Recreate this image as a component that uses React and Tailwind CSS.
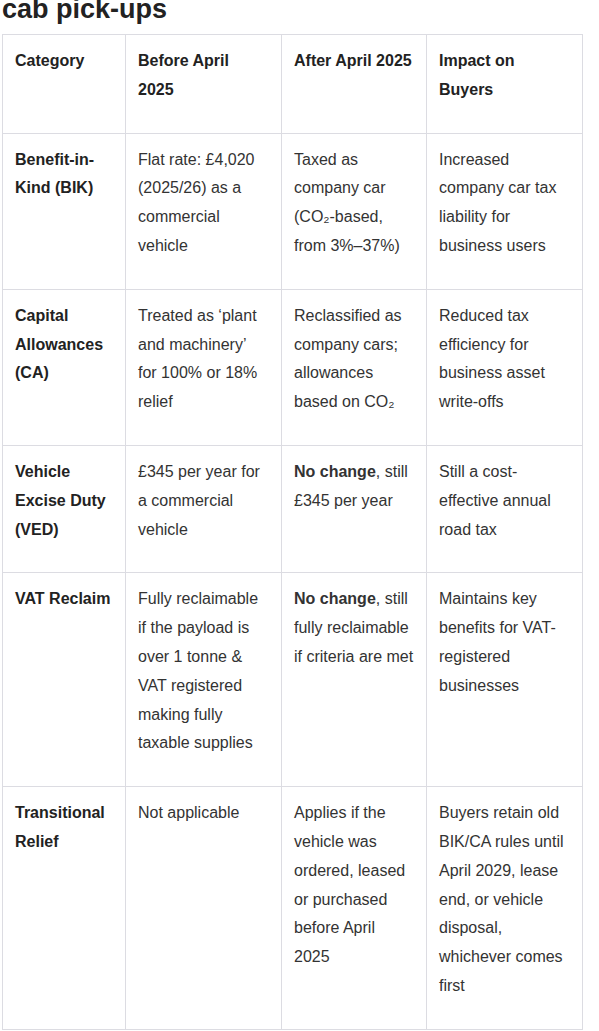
import React from "react";

const rows = [
  {
    cat: "Benefit-in-Kind (BIK)",
    before: "Flat rate: £4,020 (2025/26) as a commercial vehicle",
    after: "Taxed as company car (CO₂-based, from 3%–37%)",
    impact: "Increased company car tax liability for business users",
  },
  {
    cat: "Capital Allowances (CA)",
    before: "Treated as ‘plant and machinery’ for 100% or 18% relief",
    after: "Reclassified as company cars; allowances based on CO₂",
    impact: "Reduced tax efficiency for business asset write-offs",
  },
  {
    cat: "Vehicle Excise Duty (VED)",
    before: "£345 per year for a commercial vehicle",
    after: (
      <>
        <strong className="font-bold">No change</strong>, still £345 per year
      </>
    ),
    impact: "Still a cost-effective annual road tax",
  },
  {
    cat: "VAT Reclaim",
    before: "Fully reclaimable if the payload is over 1 tonne & VAT registered making fully taxable supplies",
    after: (
      <>
        <strong className="font-bold">No change</strong>, still fully reclaimable if criteria are met
      </>
    ),
    impact: "Maintains key benefits for VAT-registered businesses",
  },
  {
    cat: "Transitional Relief",
    before: "Not applicable",
    after: "Applies if the vehicle was ordered, leased or purchased before April 2025",
    impact: "Buyers retain old BIK/CA rules until April 2029, lease end, or vehicle disposal, whichever comes first",
  },
];

const cell = "border border-[#dcdce2] align-top pl-3 pr-3 pt-3 pb-[28px] text-left";
const cell2 = "border border-[#dcdce2] align-top pl-3 pr-[14px] pt-3 pb-[28px] text-left";

const App = () => {
  return (
    <div className="bg-white min-h-screen pl-[2px] font-['Liberation_Sans',Arial,sans-serif] text-[16px] text-[#333]">
      <h2 className="text-[27px] font-bold leading-[18px] text-[#222]">cab pick-ups</h2>
      <table className="mt-4 w-[580px] table-fixed border-collapse leading-[28.8px]">
        <colgroup>
          <col className="w-[123px]" />
          <col className="w-[156px]" />
          <col className="w-[145px]" />
          <col className="w-[156px]" />
        </colgroup>
        <thead>
          <tr className="font-bold text-[#222]">
            <th className={cell}>Category</th>
            <th className={cell2}>Before April 2025</th>
            <th className={cell}>After April 2025</th>
            <th className={cell}>Impact on Buyers</th>
          </tr>
        </thead>
        <tbody>
          {rows.map((r) => (
            <tr key={r.cat}>
              <td className={cell + " font-bold text-[#222]"}>{r.cat}</td>
              <td className={cell2}>{r.before}</td>
              <td className={cell}>{r.after}</td>
              <td className={cell}>{r.impact}</td>
            </tr>
          ))}
        </tbody>
      </table>
    </div>
  );
};

export default App;
